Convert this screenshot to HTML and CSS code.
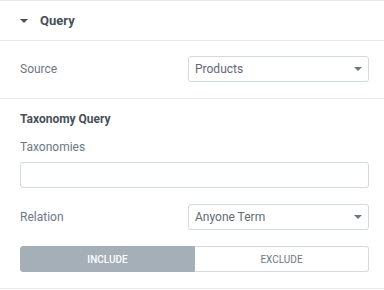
FILE: index.html
```html
<!DOCTYPE html>
<html lang="en">
<head>
    <meta charset="UTF-8">
    <title>Query</title>
    <link rel="stylesheet" href="styles.css">
</head>
<body>
    <div class="panel">
        <!-- section header -->
        <div class="section-head">
            <span class="caret"></span>
            <span class="section-title">Query</span>
        </div>

        <div class="section section-source">
            <div class="control">
                <label class="control-label">Source</label>
                <div class="select">
                    <span>Products</span>
                    <span class="select-arrow"></span>
                </div>
            </div>
        </div>

        <div class="section section-tax">
            <div class="heading">Taxonomy Query</div>

            <div class="control-block">
                <label class="control-label">Taxonomies</label>
                <div class="text-input"></div>
            </div>

            <div class="control">
                <label class="control-label">Relation</label>
                <div class="select">
                    <span>Anyone Term</span>
                    <span class="select-arrow"></span>
                </div>
            </div>

            <div class="switch">
                <button class="switch-btn active">Include</button>
                <button class="switch-btn">Exclude</button>
            </div>
        </div>
    </div>
</body>
</html>
```

FILE: styles.css
```css
* {
    margin: 0;
    padding: 0;
    box-sizing: border-box;
}

body {
    font-family: Roboto, "Liberation Sans", Arial, sans-serif;
    background: #fff;
    width: 384px;
    height: 290px;
    overflow: hidden;
}

.panel {
    border-top: 1px solid #e6e9ec;
}

/* header */
.section-head {
    display: flex;
    align-items: center;
    height: 40px;
    padding-left: 20px;
    border-bottom: 1px solid #e6e9ec;
}

.caret {
    width: 0;
    height: 0;
    border-left: 4px solid transparent;
    border-right: 4px solid transparent;
    border-top: 4px solid #495157;
    margin-right: 12px;
    margin-top: 1px;
}

.section-title {
    font-size: 13px;
    font-weight: 700;
    color: #495157;
}

/* sections */
.section {
    padding: 0 15px 0 20px;
    border-bottom: 1px solid #e6e9ec;
}

.section-source {
    padding-top: 15px;
    padding-bottom: 16px;
}

.section-tax {
    padding-top: 13px;
    padding-bottom: 16px;
}

.heading {
    font-size: 12px;
    font-weight: 700;
    color: #495157;
    line-height: 14px;
}

.control {
    display: flex;
    align-items: center;
}

.control-label {
    flex: 1;
    font-size: 12px;
    color: #6d7882;
}

.select {
    width: 181px;
    height: 26px;
    border: 1px solid #d5dadf;
    border-radius: 3px;
    display: flex;
    align-items: center;
    justify-content: space-between;
    padding: 0 6px 0 6px;
    font-size: 12px;
    color: #5f6a73;
}

.select-arrow {
    width: 0;
    height: 0;
    border-left: 4px solid transparent;
    border-right: 4px solid transparent;
    border-top: 4px solid #6d7882;
}

.control-block {
    margin-top: 14px;
}

.control-block .control-label {
    display: block;
    line-height: 14px;
}

.text-input {
    margin-top: 8px;
    height: 26px;
    border: 1px solid #d5dadf;
    border-radius: 3px;
}

.section-tax .control {
    margin-top: 16px;
}

/* include / exclude */
.switch {
    display: flex;
    margin-top: 16px;
}

.switch-btn {
    flex: 1;
    height: 26px;
    border: 1px solid #d5dadf;
    background: #fff;
    font-family: inherit;
    font-size: 10px;
    text-transform: uppercase;
    color: #6d7882;
}

.switch-btn:first-child {
    border-radius: 3px 0 0 3px;
}

.switch-btn:last-child {
    border-left: none;
    border-radius: 0 3px 3px 0;
}

.switch-btn.active {
    background: #a4afb7;
    border-color: #a4afb7;
    color: #fff;
    font-weight: 500;
}
```
